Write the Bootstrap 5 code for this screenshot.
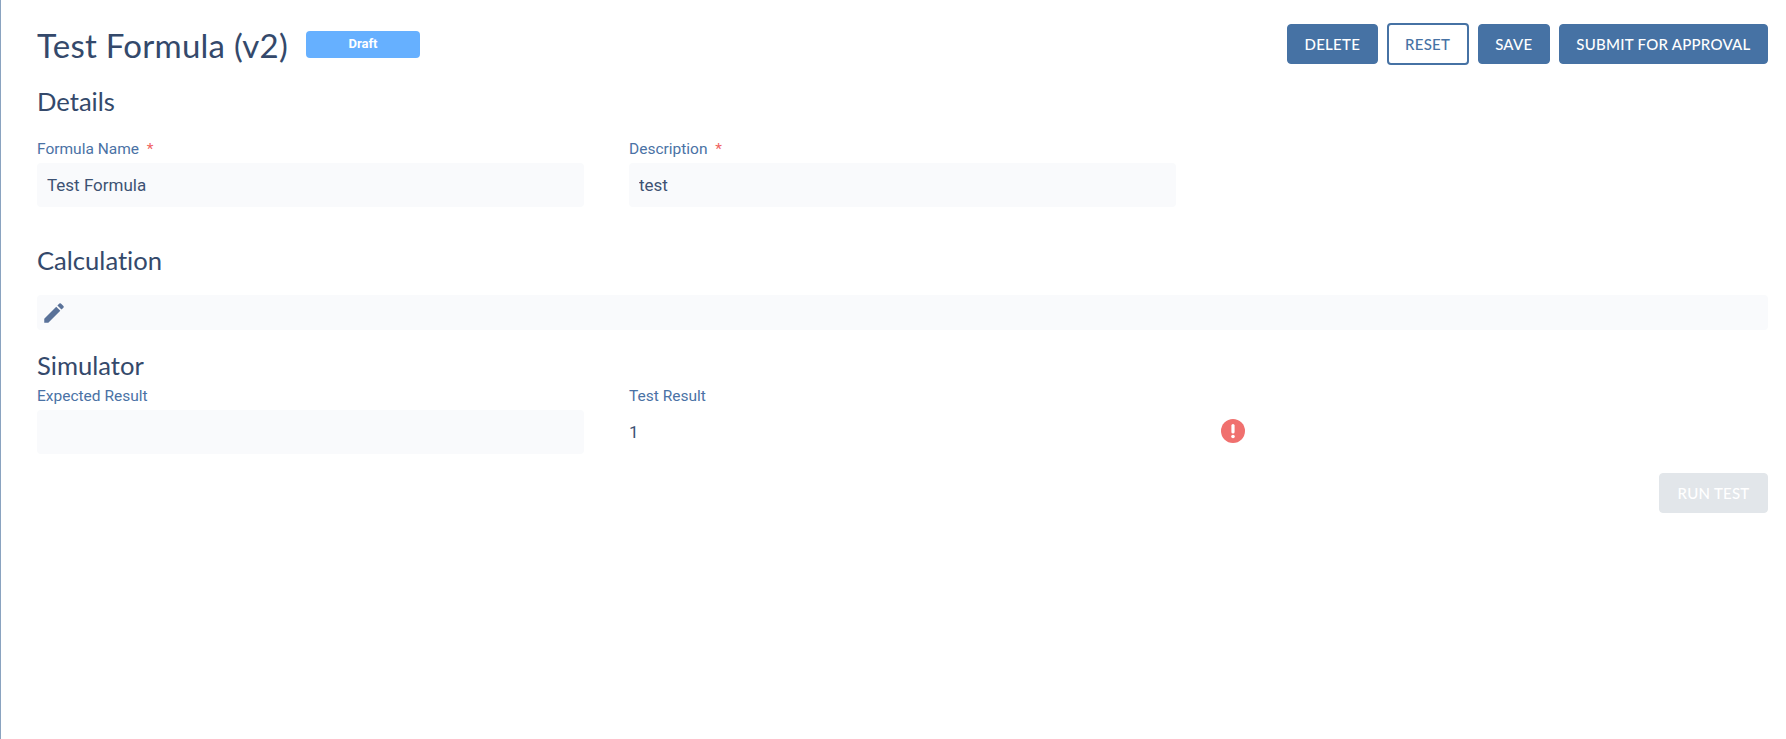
<!DOCTYPE html>
<html lang="en">
<head>
    <meta charset="UTF-8">
    <title>Test Formula</title>
    <link rel="stylesheet" href="https://cdn.jsdelivr.net/npm/bootstrap@5.3.0/dist/css/bootstrap.min.css">
    <style>
        body {
            background-color: #ffffff;
            font-family: "Roboto", sans-serif;
            color: #34496b;
        }

        /* Page frame */
        .page-frame {
            min-height: 739px;
            border-left: 1px solid #8aa3c0;
            padding: 24px 18px 0 36px;
        }

        /* Headings */
        .page-head {
            height: 42px;
        }

        .formula-title {
            font-family: "Lato", sans-serif;
            font-size: 33px;
            font-weight: 400;
            line-height: 42px;
            letter-spacing: 0.26px;
            font-variant-ligatures: none;
            margin: 0 18px 0 0;
            color: #34496b;
        }

        .draft-tag {
            width: 114px;
            height: 27px;
            margin-top: 7px;
            background-color: #66b0ff;
            border-radius: 4px;
            color: #fff;
            font-family: "Roboto", sans-serif;
            font-size: 13px;
            font-weight: 700;
            line-height: 25px;
            text-align: center;
        }

        .section-title {
            font-family: "Lato", sans-serif;
            font-size: 25.6px;
            font-weight: 400;
            line-height: 30px;
            font-variant-ligatures: none;
            margin: 0;
            color: #34496b;
        }

        /* Buttons */
        .act-btn {
            height: 40px;
            padding: 0 16.5px;
            font-family: "Lato", sans-serif;
            font-size: 15px;
            font-weight: 500;
            line-height: 38px;
            letter-spacing: 0.25px;
            border: 1px solid #4672a4;
            border-radius: 4px;
            background-color: #4672a4;
            color: #fff;
        }

        .act-btn.is-outline {
            border-width: 2px;
            height: 42px;
            margin-top: -1px;
            background-color: #fff;
            color: #4672a4;
        }

        .act-btn:disabled {
            opacity: 1;
            padding: 0 17.5px;
            background-color: #e2e6ea;
            border-color: #e2e6ea;
            color: #fff;
        }

        .head-actions {
            gap: 9px;
        }

        /* Form fields */
        .field-cols {
            gap: 45px;
        }

        .field-box {
            width: 547px;
        }

        .field-label {
            display: block;
            margin: 0 0 4px;
            font-size: 15.5px;
            line-height: 20px;
            color: #4a72a5;
        }

        .req-star {
            color: #f0645f;
            margin-left: 4px;
        }

        .field-input,
        .field-input:focus {
            height: 44px;
            padding: 0 10px;
            font-family: "Roboto", sans-serif;
            font-size: 17px;
            color: #3d5273;
            background-color: #f9fafc;
            border: 0;
            border-radius: 4px;
            box-shadow: none;
        }

        .field-plain {
            height: 44px;
            line-height: 44px;
            font-size: 17px;
            color: #3d5273;
        }

        .calc-bar {
            height: 35px;
            padding: 5px 4px;
            background-color: #f9fafc;
            border-radius: 4px;
        }

        .details-title { margin-top: 20px; }
        .details-cols { margin-top: 23px; }
        .calc-title { margin-top: 38px; }
        .calc-bar { margin-top: 20px; }
        .sim-title { margin-top: 20px; }
        .sim-cols { margin-top: 6px; }
        .run-row { margin-top: 19px; }
        .alert-mark { margin-top: 33px; }
    </style>
</head>
<body>

    <div class="page-frame">
        <!-- Header -->
        <div class="page-head d-flex align-items-start">
            <h1 class="formula-title">Test Formula (v2)</h1>
            <div class="draft-tag">Draft</div>
            <div class="ms-auto d-flex head-actions">
                <button class="btn act-btn" type="button">DELETE</button>
                <button class="btn act-btn is-outline" type="button">RESET</button>
                <button class="btn act-btn" type="button">SAVE</button>
                <button class="btn act-btn" type="button">SUBMIT FOR APPROVAL</button>
            </div>
        </div>

        <!-- Details -->
        <h2 class="section-title details-title">Details</h2>
        <div class="d-flex field-cols details-cols">
            <div class="field-box">
                <label class="field-label" for="formulaName">Formula Name <span class="req-star">*</span></label>
                <input class="form-control field-input" id="formulaName" type="text" value="Test Formula">
            </div>
            <div class="field-box">
                <label class="field-label" for="description">Description <span class="req-star">*</span></label>
                <input class="form-control field-input" id="description" type="text" value="test">
            </div>
        </div>

        <!-- Calculation -->
        <h2 class="section-title calc-title">Calculation</h2>
        <div class="calc-bar">
            <svg class="d-block" width="26" height="26" viewBox="0 0 24 24" fill="#5a7299"><path d="M3 17.25V21h3.75L17.81 9.94l-3.75-3.75L3 17.25zM20.71 7.04a1 1 0 0 0 0-1.41l-2.34-2.34a1 1 0 0 0-1.41 0l-1.83 1.83 3.75 3.75 1.83-1.83z"/></svg>
        </div>

        <!-- Simulator -->
        <h2 class="section-title sim-title">Simulator</h2>
        <div class="d-flex field-cols sim-cols">
            <div class="field-box">
                <label class="field-label" for="expected">Expected Result</label>
                <input class="form-control field-input" id="expected" type="text">
            </div>
            <div class="field-box">
                <div class="field-label">Test Result</div>
                <div class="field-plain">1</div>
            </div>
            <svg class="alert-mark" width="24" height="24" viewBox="0 0 24 24">
                <circle cx="12" cy="12" r="12" fill="#f0706e"/>
                <rect x="10.4" y="5" width="3.2" height="9.5" rx="1.6" fill="#fff"/>
                <circle cx="12" cy="17.5" r="1.8" fill="#fff"/>
            </svg>
        </div>

        <div class="run-row d-flex justify-content-end">
            <button class="btn act-btn" type="button" disabled>RUN TEST</button>
        </div>
    </div>

    <script src="https://cdn.jsdelivr.net/npm/bootstrap@5.3.0/dist/js/bootstrap.bundle.min.js"></script>
</body>
</html>
